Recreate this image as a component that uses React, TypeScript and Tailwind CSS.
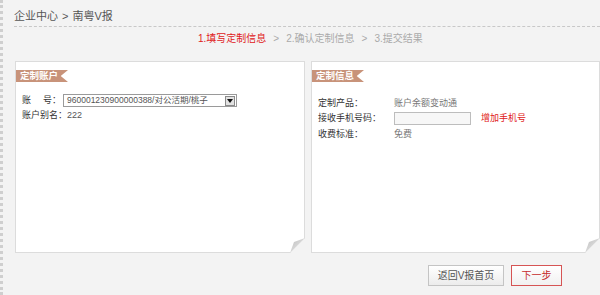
import React from 'react';

const FONT = "font-['Liberation_Sans','Noto_Sans_CJK_SC',sans-serif]";

const Ribbon: React.FC<{ label: string }> = ({ label }) => (
  <div className="flex">
    <div className="h-[12px] w-[52px] bg-[#c8937a] pl-[4px] text-[9.5px] font-bold leading-[12px] text-white [clip-path:polygon(0_0,100%_0,86%_50%,100%_100%,0_100%)]">
      {label}
    </div>
  </div>
);

const FoldCorner: React.FC = () => (
  <svg className="absolute -bottom-px -right-px" width="15" height="15" viewBox="0 0 15 15">
    <defs>
      <linearGradient id="fold" x1="0" y1="0" x2="1" y2="1">
        <stop offset="0" stopColor="#bdbdbd" />
        <stop offset="1" stopColor="#f0f0f0" />
      </linearGradient>
    </defs>
    <polygon points="15,0 15,15 0,15" fill="#f3f3f3" />
    <polygon points="0,15 15,0 4,4" fill="url(#fold)" />
  </svg>
);

const App: React.FC = () => {
  return (
    <div className={`${FONT} h-[295px] w-[600px] overflow-hidden border-l-[3px] border-dotted border-[#cfcfcf] bg-[#f3f3f3]`}>
      {/* breadcrumb */}
      <div className="ml-[11px] flex gap-[4px] border-b border-dashed border-[#c8c8c8] pb-[3px] pt-[9px] text-[11px] leading-[14px] text-[#555]">
        <span>企业中心</span>
        <span>&gt;</span>
        <span>南粤V报</span>
      </div>

      {/* steps */}
      <div className="mt-[5px] flex gap-[7px] pl-[195px] text-[10px] leading-[14px] text-[#aaa]">
        <span className="text-[#e02020]">1.填写定制信息</span>
        <span>&gt;</span>
        <span>2.确认定制信息</span>
        <span>&gt;</span>
        <span>3.提交结果</span>
      </div>

      {/* panels */}
      <div className="mt-[15px] flex gap-[6px] pl-[12px]">
        <div className="relative h-[192px] w-[290px] border border-[#dcdcdc] bg-white pt-[8px]">
          <Ribbon label="定制账户" />
          <div className="mt-[12px] pl-[6px] text-[9px] text-[#333]">
            <div className="flex h-[13px] items-center">
              <div className="flex w-[41px] justify-between pr-[2px]">
                <span>账</span>
                <span>号：</span>
              </div>
              <div className="flex h-[13px] w-[174px] items-center justify-between border border-[#9a9a9a] bg-white pl-[3px] pr-[1px]">
                <span className="text-[8.5px] text-[#555]">960001230900000388/对公活期/桃子</span>
                <span className="flex h-[10px] w-[10px] items-center justify-center border border-[#8a8a8a] bg-[#e2e2e2]">
                  <svg width="6" height="4" viewBox="0 0 6 4">
                    <polygon points="0,0 6,0 3,4" fill="#111" />
                  </svg>
                </span>
              </div>
            </div>
            <div className="mt-[1px] leading-[14px]">
              账户别名：<span className="text-[#555]">222</span>
            </div>
          </div>
          <FoldCorner />
        </div>

        <div className="relative h-[192px] flex-1 border border-[#dcdcdc] bg-white pt-[8px]">
          <Ribbon label="定制信息" />
          <div className="mt-[15px] pl-[6px] text-[9px] text-[#333]">
            <div className="flex h-[14px] items-center">
              <span className="w-[76px]">定制产品：</span>
              <span className="text-[#777]">账户余额变动通</span>
            </div>
            <div className="flex h-[15px] items-center">
              <span className="w-[76px]">接收手机号码：</span>
              <span className="h-[13px] w-[77px] border border-[#bdbdbd] bg-[#f7f7f7]" />
              <span className="ml-[10px] text-[#e02020]">增加手机号</span>
            </div>
            <div className="mt-[2px] flex h-[14px] items-center">
              <span className="w-[76px]">收费标准：</span>
              <span className="text-[#777]">免费</span>
            </div>
          </div>
          <FoldCorner />
        </div>
      </div>

      {/* actions */}
      <div className="mt-[12px] flex gap-[7px] pl-[425px]">
        <button className="h-[21px] w-[76px] border border-[#c4c4c4] bg-gradient-to-b from-white to-[#ececec] text-[10px] text-[#555]">
          返回V报首页
        </button>
        <button className="h-[21px] w-[51px] border border-[#d65454] bg-gradient-to-b from-white to-[#f1f1f1] text-[10px] text-[#c62b2b]">
          下一步
        </button>
      </div>
    </div>
  );
};

export default App;
